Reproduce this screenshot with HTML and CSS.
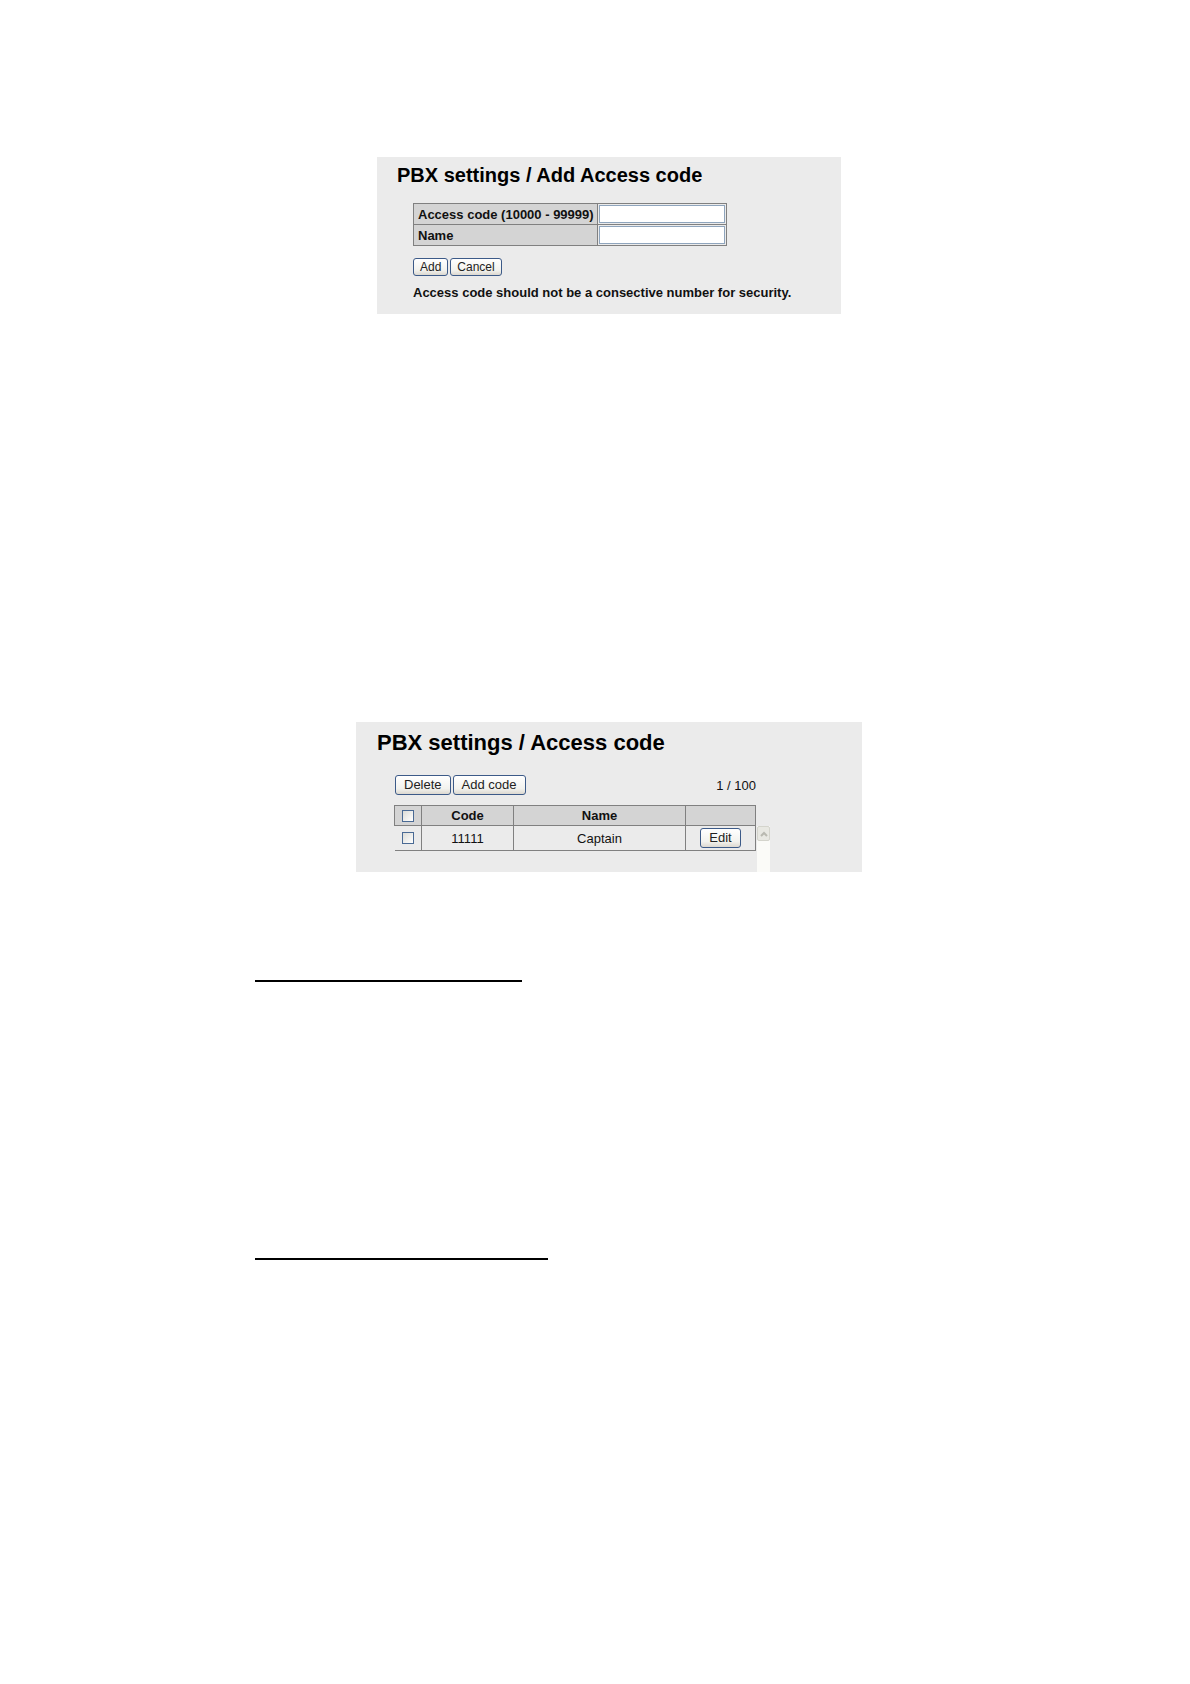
FILE: index.html
```
<!DOCTYPE html>
<html lang="en">
<head>
  <meta charset="UTF-8" />
  <title>PBX settings</title>
  <meta name="viewport" content="width=device-width, initial-scale=1" />
  <link rel="stylesheet" href="styles.css">
</head>
<body>
  <main class="page">
    <form class="panel add-panel">
      <h1>PBX settings / Add Access code</h1>
      <div class="panel-body">
        <table class="form-table">
          <tr>
            <th><label for="code">Access code (10000 - 99999)</label></th>
            <td><input type="text" id="code" name="code"></td>
          </tr>
          <tr>
            <th><label for="name">Name</label></th>
            <td><input type="text" id="name" name="name"></td>
          </tr>
        </table>
        <div class="buttons">
          <button type="submit">Add</button>
          <button type="button">Cancel</button>
        </div>
        <p class="note">Access code should not be a consective number for security.</p>
      </div>
    </form>

    <section class="panel list-panel">
      <h2>PBX settings / Access code</h2>
      <div class="toolbar">
        <div class="buttons">
          <button type="button">Delete</button>
          <button type="button">Add code</button>
        </div>
        <span>1 / 100</span>
      </div>
      <div class="list">
        <table class="code-table">
          <thead>
            <tr>
              <th class="col-check"><input type="checkbox" aria-label="Select all"></th>
              <th class="col-code">Code</th>
              <th>Name</th>
              <th class="col-edit"></th>
            </tr>
          </thead>
          <tbody>
            <tr>
              <td><input type="checkbox" aria-label="Select 11111"></td>
              <td>11111</td>
              <td>Captain</td>
              <td><button type="button">Edit</button></td>
            </tr>
          </tbody>
        </table>
        <div class="scrollbar">
          <button type="button" class="scroll-up" aria-label="Scroll up">
            <svg width="8" height="6" viewBox="0 0 8 6"><path d="M1 5l3-3 3 3" fill="none" stroke="#b9b9b0" stroke-width="2"/></svg>
          </button>
        </div>
      </div>
    </section>

    <hr class="rule">
    <hr class="rule rule-long">
  </main>
</body>
</html>
```

FILE: styles.css
```
* {
  box-sizing: border-box;
}
body {
  margin: 0;
  background: white;
  color: #111;
  font-family: "Liberation Sans", Arial, sans-serif;
  font-size: 13px;
}
.page {
  max-width: 764px;
  margin: 0 auto;
  padding: 157px 14px 80px 42px;
}
.panel {
  margin: 0 auto;
  background: #ebebeb;
}
h1, h2 {
  margin: 0;
  color: #000;
  line-height: 24px;
}
h1 {
  font-size: 20px;
}
h2 {
  font-size: 22px;
}
table {
  border-collapse: collapse;
}
th {
  background: #d4d4d4;
}
button {
  height: 18px;
  padding: 0 6px;
  border: 1px solid #3c5a88;
  border-radius: 3px;
  background: linear-gradient(#fff, #f2f2ee 70%, #dcd8d0);
  color: #222;
  font-family: inherit;
  font-size: 12px;
  line-height: 16px;
}
.buttons {
  display: flex;
  gap: 2px;
}

/* add form */
.add-panel {
  max-width: 464px;
  padding: 6px 20px 13px;
}
.panel-body {
  padding: 16px 0 0 16px;
}
.form-table th,
.form-table td {
  height: 20px;
  border: 1px solid #808080;
}
.form-table th {
  padding: 0 3px 0 4px;
  text-align: left;
}
.form-table td {
  padding: 1px;
}
.form-table input {
  display: block;
  width: 126px;
  height: 18px;
  padding: 1px 3px;
  border: 1px solid #8fa5bd;
  background: white;
  font-family: inherit;
  font-size: 13px;
}
.add-panel .buttons {
  margin-top: 12px;
}
.note {
  margin: 9px 0 0;
  font-weight: bold;
  line-height: 16px;
}

/* code list */
.list-panel {
  max-width: 506px;
  margin-top: 408px;
  padding: 9px 21px 0;
}
.list-panel button {
  height: 20px;
  padding: 0 8px;
  font-size: 13px;
  line-height: 18px;
}
.toolbar {
  display: flex;
  justify-content: space-between;
  align-items: center;
  max-width: 379px;
  margin-top: 20px;
  padding: 0 0 0 18px;
}
.list {
  display: flex;
  margin-top: 10px;
  padding-left: 17px;
}
.code-table {
  width: 362px;
  height: 46px;
  table-layout: fixed;
}
.code-table th,
.code-table td {
  padding: 0;
  border: 1px solid #808080;
  text-align: center;
}
.code-table th {
  height: 20px;
}
.code-table td {
  height: 25px;
}
.code-table td:first-child {
  border-left: none;
}
.col-check {
  width: 27px;
}
.col-code {
  width: 92px;
}
.col-edit {
  width: 70px;
}
.code-table input {
  appearance: none;
  display: block;
  width: 12px;
  height: 12px;
  margin: 0 auto;
  border: 1px solid #4a6a94;
  background: linear-gradient(135deg, #dcdcd7, #fff);
}
.scrollbar {
  width: 13px;
  height: 46px;
  margin: 21px 0 0 1px;
  background: #fbfbf8;
}
.list-panel .scroll-up {
  display: flex;
  align-items: center;
  justify-content: center;
  width: 13px;
  height: 15px;
  padding: 0;
  border-color: #d4d4cc;
  border-radius: 2px;
  background: #e8e8e2;
}

/* section rules */
.rule {
  width: 267px;
  height: 2px;
  margin: 108px 0 0;
  border: none;
  background: #000;
}
.rule-long {
  width: 293px;
  margin-top: 276px;
}
```
